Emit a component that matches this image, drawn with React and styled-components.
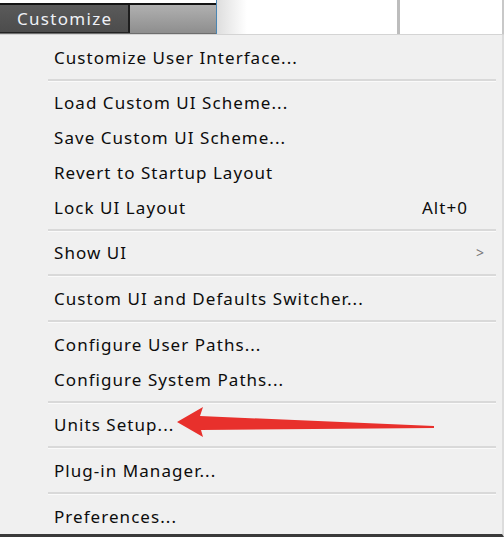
import React from 'react';
import styled, { createGlobalStyle } from 'styled-components';

const GlobalStyle = createGlobalStyle`
  html, body {
    margin: 0;
    padding: 0;
    background: #ffffff;
  }
  body {
    font-family: "Noto Sans", "DejaVu Sans", sans-serif;
  }
`;

const Screen = styled.div`
  width: 504px;
  height: 540px;
  overflow: hidden;
  background: #ffffff;
  display: flex;
  flex-direction: column;
`;

const TopBar = styled.div`
  height: 35px;
  display: flex;
  border-bottom: 1px solid #d4d4d4;
  box-sizing: border-box;
`;

const TabStrip = styled.div`
  width: 216px;
  padding-top: 3px;
  display: flex;
  flex-direction: column;
  box-sizing: border-box;
`;

const TabRow = styled.div`
  flex: 1;
  display: flex;
  border-top: 2px solid #141414;
  border-bottom: 1px solid #6e6e6e;
`;

const Tab = styled.div`
  width: 130px;
  box-sizing: border-box;
  border-right: 2px solid #1e1e1e;
  border-bottom: 1px solid #222;
  background: linear-gradient(#5a5a5a, #4c4c4c);
  color: #eef0f6;
  font-size: 17px;
  display: flex;
  align-items: center;
  padding-left: 17px;
  letter-spacing: 1.3px;
`;

const TabFill = styled.div`
  flex: 1;
  background: linear-gradient(#b0b0b0, #8e8e8e);
`;

const Panes = styled.div`
  flex: 1;
  display: flex;
  border-left: 1px solid #4a86b4;
  border-right: 2px solid #c8c8c8;
`;

const Pane = styled.div`
  width: ${(p) => p.$width || 'auto'};
  flex: ${(p) => (p.$width ? 'none' : 1)};
  background: ${(p) =>
    p.$shade ? 'linear-gradient(90deg, #dedede, #ffffff 30px)' : '#ffffff'};
  border-right: ${(p) => (p.$divider ? '3px solid #bdbdbd' : 'none')};
`;

const Menu = styled.div`
  position: relative;
  height: 502px;
  background: #f0f0f0;
  border-right: 2px solid #dcdcdc;
  border-bottom: 3px solid #3a3a3a;
  padding: 5px 6px 0 48px;
  box-sizing: border-box;
`;

const Item = styled.div`
  height: 35px;
  display: flex;
  align-items: center;
  padding: 0 27px 0 6px;
  font-size: 17px;
  color: #0c0c0c;
  letter-spacing: 1.05px;
`;

const Label = styled.span`
  flex: 1;
  white-space: nowrap;
`;

const Shortcut = styled.span`
  color: #0c0c0c;
  margin-right: 1px;
`;

const Chevron = styled.span`
  color: #777;
  font-size: 14px;
  margin-right: -16px;
`;

const Separator = styled.div`
  height: ${(p) => p.$h}px;
  display: flex;
  flex-direction: column;
  justify-content: center;
  &::before {
    content: '';
    height: 2px;
    background: #d9d9d9;
  }
  &::after {
    content: '';
    height: 1px;
    background: #fafafa;
  }
`;

const Arrow = styled.svg`
  position: absolute;
  left: 176px;
  top: 371px;
  pointer-events: none;
`;

const sepHeights = [10, 10, 11, 11, 10, 11, 11];

const groups = [
  [{ label: 'Customize User Interface...' }],
  [
    { label: 'Load Custom UI Scheme...' },
    { label: 'Save Custom UI Scheme...' },
    { label: 'Revert to Startup Layout' },
    { label: 'Lock UI Layout', shortcut: 'Alt+0' },
  ],
  [{ label: 'Show UI', submenu: true }],
  [{ label: 'Custom UI and Defaults Switcher...' }],
  [{ label: 'Configure User Paths...' }, { label: 'Configure System Paths...' }],
  [{ label: 'Units Setup...' }],
  [{ label: 'Plug-in Manager...' }],
  [{ label: 'Preferences...' }],
];

export default function App() {
  return (
    <>
      <GlobalStyle />
      <Screen>
        <TopBar>
          <TabStrip>
            <TabRow>
              <Tab>Customize</Tab>
              <TabFill />
            </TabRow>
          </TabStrip>
          <Panes>
            <Pane $width="180px" $shade $divider />
            <Pane />
          </Panes>
        </TopBar>
        <Menu>
          {groups.map((group, gi) => (
            <React.Fragment key={gi}>
              {gi > 0 && <Separator $h={sepHeights[gi - 1]} />}
              {group.map((item) => (
                <Item key={item.label}>
                  <Label>{item.label}</Label>
                  {item.shortcut && <Shortcut>{item.shortcut}</Shortcut>}
                  {item.submenu && <Chevron>&gt;</Chevron>}
                </Item>
              ))}
            </React.Fragment>
          ))}
          <Arrow width="262" height="34" viewBox="0 0 262 34">
            <path
              d="M1 16 L27 1 L24 10 L258 20 L258 22 L25 24 L27 31 Z"
              fill="#e8302c"
            />
          </Arrow>
        </Menu>
      </Screen>
    </>
  );
}
